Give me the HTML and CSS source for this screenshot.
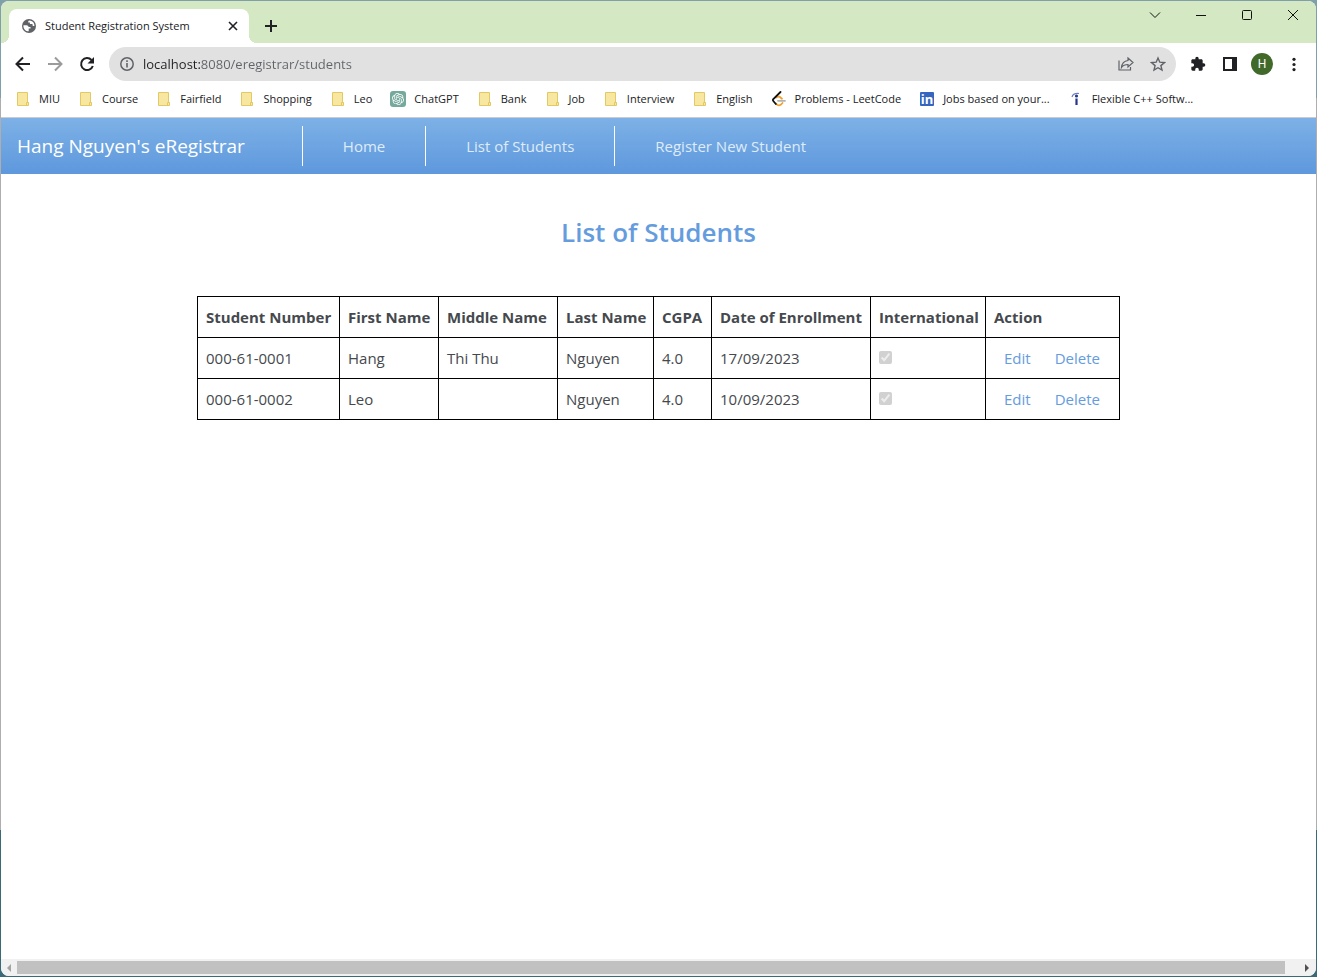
FILE: index.html
```html
<!DOCTYPE html>
<html lang="en">
<head>
<meta charset="utf-8">
<title>Student Registration System</title>
<link rel="stylesheet" href="styles.css">
</head>
<body>
<svg class="defs" aria-hidden="true">
  <symbol id="folder" viewBox="0 0 16 16">
    <path d="M2.5 1.5h10v10h1v3h-11z" fill="#f8e7a1" stroke="#e2c964"/>
    <path d="M11.5 14.5v-3h2" fill="none" stroke="#e2c964"/>
  </symbol>
</svg>
<div class="window">
  <div class="tabstrip">
    <div class="tab">
      <svg class="icon-14" viewBox="0 0 14 14" aria-hidden="true">
        <circle cx="7" cy="7" r="7" fill="#5f6368"/>
        <path d="M1.500 6.200h3.200c1.300 0 1.300 1.700 2.500 1.800h1.300v1.400h-1.800v2.900c-3 0-5.300-2.300-5.300-5.300zM7.300 1.600c-1 .4-1.300 1.200-1 2h1.600v1.500h2.500l.4 1.900h1.600c.2-3-2-5.300-5.100-5.400z" fill="#fff"/>
      </svg>
      <span class="tab-title">Student Registration System</span>
      <button class="tab-close" aria-label="Close tab"><svg class="icon-16" viewBox="0 0 16 16"><path d="M4 4l8 8M12 4l-8 8" stroke="#202124" stroke-width="1.600"/></svg></button>
    </div>
    <button class="new-tab" aria-label="New tab"><svg class="icon-16" viewBox="0 0 16 16"><path d="M8 2v12M2 8h12" stroke="#202124" stroke-width="2"/></svg></button>
    <div class="window-controls">
      <button aria-label="Search tabs"><svg class="icon-16" viewBox="0 0 16 16"><path d="M3 5.500l5 5 5-5" fill="none" stroke="#111"/></svg></button>
      <button aria-label="Minimize"><svg class="icon-16" viewBox="0 0 16 16"><path d="M3 8.500h10" stroke="#111"/></svg></button>
      <button aria-label="Maximize"><svg class="icon-16" viewBox="0 0 16 16"><rect x="3.500" y="3.500" width="9" height="9" rx="1" fill="none" stroke="#111"/></svg></button>
      <button aria-label="Close"><svg class="icon-16" viewBox="0 0 16 16"><path d="M3 3l10 10M13 3L3 13" stroke="#111"/></svg></button>
    </div>
  </div>

  <div class="toolbar">
    <button class="tool" aria-label="Back"><svg class="icon-16" viewBox="0 0 16 16"><path d="M15 8H2M8 1.500L1.500 8 8 14.500" fill="none" stroke="#202124" stroke-width="2"/></svg></button>
    <button class="tool" aria-label="Forward"><svg class="icon-16" viewBox="0 0 16 16"><path d="M1 8h13M8 1.500L14.500 8 8 14.500" fill="none" stroke="#9a9b9d" stroke-width="2"/></svg></button>
    <button class="tool" aria-label="Reload"><svg class="icon-16" viewBox="0 0 16 16"><path d="M13.800 10A6 6 0 1 1 12.500 4" fill="none" stroke="#202124" stroke-width="2"/><path d="M15 1v6.500H8.500z" fill="#202124"/></svg></button>
    <div class="omnibox">
      <svg class="icon-16" viewBox="0 0 16 16" aria-hidden="true"><circle cx="8" cy="8" r="6.200" fill="none" stroke="#5f6368" stroke-width="1.500"/><path d="M8 7v4.500M8 4.300v1.600" stroke="#5f6368" stroke-width="1.600"/></svg>
      <input class="url" type="text" aria-label="Address" value="localhost:8080/eregistrar/students">
      <button class="tool" aria-label="Share"><svg class="icon-16" viewBox="0 0 16 16"><path d="M1 4.500v9.500h11.500v-3M10 2l5 4.500-5 4.500V8.500C7 8.500 5 9.300 3.500 11.500c.3-3.500 2.500-6.500 6.500-7z" fill="none" stroke="#5f6368" stroke-width="1.200"/></svg></button>
      <button class="tool" aria-label="Bookmark"><svg class="icon-16" viewBox="0 0 16 16"><path d="M8 2l1.800 4.200 4.600.4-3.500 3 1.100 4.500L8 11.700l-4 2.400 1.100-4.500-3.500-3 4.600-.4z" fill="none" stroke="#5f6368" stroke-width="1.400"/></svg></button>
    </div>
    <button class="tool" aria-label="Extensions"><svg class="icon-16" viewBox="0 0 24 24"><path fill="#202124" d="M20.500 11H19V7c0-1.100-.9-2-2-2h-4V3.500a2.500 2.500 0 0 0-5 0V5H4c-1.100 0-2 .9-2 2v3.800h1.500a2.700 2.700 0 0 1 0 5.400H2V20c0 1.100.9 2 2 2h3.800v-1.500a2.700 2.700 0 0 1 5.400 0V22H17c1.100 0 2-.9 2-2v-4h1.500a2.500 2.500 0 0 0 0-5z"/></svg></button>
    <button class="tool" aria-label="Side panel"><svg class="icon-16" viewBox="0 0 16 16"><path fill="#202124" fill-rule="evenodd" d="M1 1h14v14H1zM3 3v10h7V3z"/></svg></button>
    <button class="tool" aria-label="Profile"><span class="avatar">H</span></button>
    <button class="tool" aria-label="Menu"><svg class="icon-16" viewBox="0 0 16 16" fill="#202124"><circle cx="8" cy="3.300" r="1.600"/><circle cx="8" cy="8.500" r="1.600"/><circle cx="8" cy="13.600" r="1.600"/></svg></button>
  </div>

  <nav class="bookmarks" aria-label="Bookmarks">
    <a href="#"><svg class="icon-16"><use href="#folder"/></svg>MIU</a>
    <a href="#"><svg class="icon-16"><use href="#folder"/></svg>Course</a>
    <a href="#"><svg class="icon-16"><use href="#folder"/></svg>Fairfield</a>
    <a href="#"><svg class="icon-16"><use href="#folder"/></svg>Shopping</a>
    <a href="#"><svg class="icon-16"><use href="#folder"/></svg>Leo</a>
    <a href="#"><svg class="icon-16" viewBox="0 0 32 32"><rect width="32" height="32" rx="6" fill="#75a99c"/><path transform="translate(4 4)" fill="#fff" d="M22.2819 9.8211a5.9847 5.9847 0 0 0-.5157-4.9108 6.0462 6.0462 0 0 0-6.5098-2.9A6.0651 6.0651 0 0 0 4.9807 4.1818a5.9847 5.9847 0 0 0-3.9977 2.9 6.0462 6.0462 0 0 0 .7427 7.0966 5.98 5.98 0 0 0 .511 4.9107 6.051 6.051 0 0 0 6.5146 2.9001A5.9847 5.9847 0 0 0 13.2599 24a6.0557 6.0557 0 0 0 5.7718-4.2058 5.9894 5.9894 0 0 0 3.9977-2.9001 6.0557 6.0557 0 0 0-.7475-7.0729zm-9.022 12.6081a4.4755 4.4755 0 0 1-2.8764-1.0408l.1419-.0804 4.7783-2.7582a.7948.7948 0 0 0 .3927-.6813v-6.7369l2.02 1.1686a.071.071 0 0 1 .038.052v5.5826a4.504 4.504 0 0 1-4.4945 4.4944zm-9.6607-4.1254a4.4708 4.4708 0 0 1-.5346-3.0137l.142.0852 4.783 2.7582a.7712.7712 0 0 0 .7806 0l5.8428-3.3685v2.3324a.0804.0804 0 0 1-.0332.0615L9.74 19.9502a4.4992 4.4992 0 0 1-6.1408-1.6464zM2.3408 7.8956a4.485 4.485 0 0 1 2.3655-1.9728V11.6a.7664.7664 0 0 0 .3879.6765l5.8144 3.3543-2.0201 1.1685a.0757.0757 0 0 1-.071 0l-4.8303-2.7865A4.504 4.504 0 0 1 2.3408 7.872zm16.5963 3.8558L13.1038 8.364 15.1192 7.2a.0757.0757 0 0 1 .071 0l4.8303 2.7913a4.4944 4.4944 0 0 1-.6765 8.1042v-5.6772a.79.79 0 0 0-.407-.667zm2.0107-3.0231l-.142-.0852-4.7735-2.7818a.7759.7759 0 0 0-.7854 0L9.409 9.2297V6.8974a.0662.0662 0 0 1 .0284-.0615l4.8303-2.7866a4.4992 4.4992 0 0 1 6.6802 4.66zM8.3065 12.863l-2.02-1.1638a.0804.0804 0 0 1-.038-.0567V6.0742a4.4992 4.4992 0 0 1 7.3757-3.4537l-.142.0805L8.704 5.459a.7948.7948 0 0 0-.3927.6813zm1.0976-2.3654l2.602-1.4998 2.6069 1.4998v2.9994l-2.5974 1.4997-2.6067-1.4997Z"/></svg>ChatGPT</a>
    <a href="#"><svg class="icon-16"><use href="#folder"/></svg>Bank</a>
    <a href="#"><svg class="icon-16"><use href="#folder"/></svg>Job</a>
    <a href="#"><svg class="icon-16"><use href="#folder"/></svg>Interview</a>
    <a href="#"><svg class="icon-16"><use href="#folder"/></svg>English</a>
    <a href="#"><svg class="icon-16" viewBox="0 0 16 16" fill="none" stroke-linecap="round" stroke-width="1.800"><path d="M5 6.500q2.500-2 4.500 0l1.500 1.200M5 12.500q3 4 6.500-.5" stroke="#f0a030"/><path d="M9.500 1L2.300 8q-.8 1 0 2l2.500 3" stroke="#111"/><path d="M7 9.800h7" stroke="#b3b3b3"/></svg>Problems - LeetCode</a>
    <a href="#"><svg class="icon-16" viewBox="0 0 16 16"><rect x="1" y="1" width="14" height="14" rx="1" fill="#3565bf"/><text x="8" y="13" class="in-logo">in</text></svg>Jobs based on your...</a>
    <a href="#"><svg class="icon-16" viewBox="0 0 16 16"><path d="M4 6q1-4 7-3.500" fill="none" stroke="#6b7fc0" stroke-width="1.200"/><circle cx="8.500" cy="5" r="1.600" fill="#26358a"/><path d="M8.500 7.500v6.500" stroke="#26358a" stroke-width="2.200"/></svg>Flexible C++ Softw...</a>
  </nav>

  <div class="page">
    <nav class="navbar">
      <a class="brand" href="#">Hang Nguyen's eRegistrar</a>
      <a class="nav-link" href="#">Home</a>
      <a class="nav-link" href="#">List of Students</a>
      <a class="nav-link" href="#">Register New Student</a>
    </nav>
    <main>
      <h1>List of Students</h1>
      <table>
        <colgroup><col class="c-number"><col class="c-first"><col class="c-middle"><col class="c-last"><col class="c-cgpa"><col class="c-date"><col class="c-intl"><col class="c-action"></colgroup>
        <thead>
          <tr><th>Student Number</th><th>First Name</th><th>Middle Name</th><th>Last Name</th><th>CGPA</th><th>Date of Enrollment</th><th>International</th><th>Action</th></tr>
        </thead>
        <tbody>
          <tr><td>000-61-0001</td><td>Hang</td><td>Thi Thu</td><td>Nguyen</td><td>4.0</td><td>17/09/2023</td><td><input type="checkbox" aria-label="International" checked disabled></td><td><div class="actions"><a href="#">Edit</a><a href="#">Delete</a></div></td></tr>
          <tr><td>000-61-0002</td><td>Leo</td><td></td><td>Nguyen</td><td>4.0</td><td>10/09/2023</td><td><input type="checkbox" aria-label="International" checked disabled></td><td><div class="actions"><a href="#">Edit</a><a href="#">Delete</a></div></td></tr>
        </tbody>
      </table>
    </main>
  </div>

  <div class="scrollbar">
    <button aria-label="Scroll left"><svg class="icon-16" viewBox="0 0 16 16"><path d="M10 4v8L6 8z" fill="#a3a3a3"/></svg></button>
    <div class="thumb"></div>
    <button aria-label="Scroll right"><svg class="icon-16" viewBox="0 0 16 16"><path d="M6 4v8l4-4z" fill="#505050"/></svg></button>
  </div>
</div>
</body>
</html>
```

FILE: styles.css
```css
* { box-sizing: border-box; }

body {
  margin: 0;
  height: 100vh;
  padding: 1px;
  background: linear-gradient(#7f9fa9 0, #7f9fa9 10%, #aeaeae 10%, #aeaeae 85%, #3a6a78 85%);
  font-family: "Open Sans", "Noto Sans", sans-serif;
  font-size: 12px;
  color: #202124;
}

a { text-decoration: none; color: inherit; }

button {
  display: flex;
  align-items: center;
  justify-content: center;
  padding: 0;
  border: 0;
  background: none;
  font: inherit;
}

svg { display: block; flex: none; }
.defs { position: absolute; width: 0; height: 0; }
.icon-14 { width: 14px; height: 14px; }
.icon-16 { width: 16px; height: 16px; }

.window {
  height: 100%;
  display: flex;
  flex-direction: column;
  overflow: hidden;
  border-radius: 8px;
  background: #fff;
}

/* Tab strip */
.tabstrip {
  display: flex;
  height: 42px;
  padding-left: 8px;
  background: #d3e8c3;
}

.tab {
  position: relative;
  display: flex;
  align-items: center;
  width: 240px;
  margin-top: 8px;
  padding: 0 8px 0 13px;
  gap: 9px;
  border-radius: 8px 8px 0 0;
  background: #fff;
}

.tab::before,
.tab::after {
  content: "";
  position: absolute;
  bottom: 0;
  width: 8px;
  height: 8px;
}
.tab::before { right: 100%; background: radial-gradient(circle at 0 0, transparent 8px, #fff 8px); }
.tab::after { left: 100%; background: radial-gradient(circle at 100% 0, transparent 8px, #fff 8px); }

.tab-title { flex: 1; padding-bottom: 2px; font-size: 11px; white-space: nowrap; }
.new-tab { width: 28px; height: 28px; margin: 11px 0 0 8px; }
.window-controls { display: flex; margin-left: auto; height: 28px; }
.window-controls button { width: 46px; }

/* Toolbar */
.toolbar {
  display: flex;
  align-items: center;
  padding: 4px 6px 0;
}
.tool { width: 32px; height: 32px; flex: none; }

.omnibox {
  flex: 1;
  display: flex;
  align-items: center;
  height: 34px;
  margin: 0 6px;
  padding: 0 2px 0 10px;
  border-radius: 17px;
  background: #e1e1e1;
}

.url {
  flex: 1;
  min-width: 0;
  margin-left: 8px;
  padding: 0;
  border: 0;
  font: 13px "Open Sans", "Noto Sans", sans-serif;
  color: transparent;
  background: linear-gradient(90deg, #202124 58px, #5f6368 58px);
  background-clip: text;
  -webkit-background-clip: text;
}

.avatar {
  width: 22px;
  line-height: 22px;
  border-radius: 50%;
  background: #41692a;
  color: #fff;
  font-family: Roboto, sans-serif;
  font-size: 12px;
  text-align: center;
}

/* Bookmarks */
.bookmarks {
  display: flex;
  align-items: center;
  gap: 18px;
  height: 37px;
  padding: 0 0 1px 14px;
  border-bottom: 1px solid #ccc;
  font-size: 11px;
  white-space: nowrap;
}
.bookmarks a { display: flex; align-items: center; gap: 8px; }
.in-logo { font: bold 13px "Open Sans", sans-serif; fill: #fff; text-anchor: middle; }

/* Web page */
.page {
  flex: 1;
  font-size: 15px;
  color: #45494e;
}

.navbar {
  display: flex;
  align-items: center;
  height: 56px;
  padding-left: 16px;
  background: linear-gradient(#7db1e6, #5e98dd);
}
.brand { margin-right: 57px; color: #fff; font-size: 19px; }
.nav-link {
  padding: 0 40px;
  border-left: 1px solid #fff;
  line-height: 40px;
  color: #dfebf9;
}

main {
  display: flex;
  flex-direction: column;
  align-items: center;
  padding-top: 40px;
}
h1 {
  margin: 0;
  font-size: 26px;
  font-weight: 600;
  line-height: 36px;
  color: #659cde;
}

table {
  margin-top: 46px;
  border-collapse: collapse;
  table-layout: fixed;
  width: 923px;
  max-width: 100%;
}
.c-number { width: 142px; }
.c-first { width: 99px; }
.c-middle { width: 119px; }
.c-last { width: 96px; }
.c-cgpa { width: 58px; }
.c-date { width: 159px; }
.c-intl { width: 115px; }
.c-action { width: 134px; }

th, td {
  height: 41px;
  padding: 0 8px;
  border: 1px solid #000;
  text-align: left;
  white-space: nowrap;
}
th { font-weight: 700; }
td input { display: block; width: 13px; height: 13px; margin: 0 0 2px; }
.actions { display: flex; gap: 24px; padding-left: 10px; color: #659cde; }

/* Horizontal scrollbar */
.scrollbar {
  display: flex;
  align-items: center;
  height: 17px;
  padding-right: 1px;
  background: #f1f1f1;
}
.thumb { flex: 1; height: 13px; margin-right: 14px; background: #c1c1c1; }
```
